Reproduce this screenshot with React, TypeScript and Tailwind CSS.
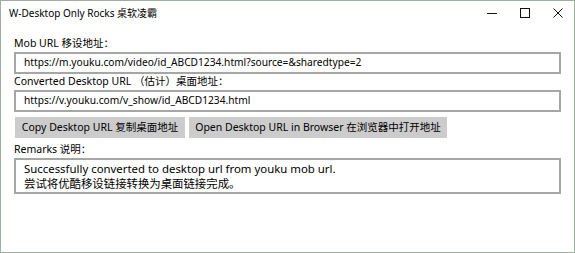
const font = { fontFamily: '"Noto Sans", "Noto Sans CJK SC", sans-serif' };

function TitleBar() {
  return (
    <div className="flex h-[24px] items-center">
      <div className="flex-1 pl-[8px] text-[10px] text-black">W-Desktop Only Rocks 桌软凌霸</div>
      <div className="flex h-full">
        <button className="flex h-full w-[33px] items-center justify-center">
          <svg width="10" height="10" viewBox="0 0 10 10">
            <path d="M0 5.5h10" stroke="#111" strokeWidth="1" />
          </svg>
        </button>
        <button className="flex h-full w-[33px] items-center justify-center">
          <svg width="10" height="10" viewBox="0 0 10 10">
            <rect x="0.5" y="0.5" width="9" height="9" fill="none" stroke="#111" strokeWidth="1" />
          </svg>
        </button>
        <button className="flex h-full w-[33px] items-center justify-center">
          <svg width="10" height="10" viewBox="0 0 10 10">
            <path d="M0.5 0.5l9 9M9.5 0.5l-9 9" stroke="#111" strokeWidth="1" />
          </svg>
        </button>
      </div>
    </div>
  );
}

function Field({ label, value }: { label: string; value: string }) {
  return (
    <div className="flex flex-col">
      <div className="h-[15px] text-[10.5px] leading-[15px] text-black">{label}</div>
      <div className="mt-[1px] flex h-[22px] items-center whitespace-nowrap border-2 border-[#a6a6a6] px-[8px] text-[10.2px] text-black">
        {value}
      </div>
    </div>
  );
}

export default function App() {
  return (
    <div
      className="flex h-[253px] w-[575px] flex-col border border-[#9fae9f] bg-white"
      style={font}
    >
      <TitleBar />
      <div className="flex w-[560px] flex-col pl-[13px] pt-[11px]">
        <Field label="Mob URL 移设地址：" value="https://m.youku.com/video/id_ABCD1234.html?source=&sharedtype=2" />
        <Field label="Converted Desktop URL （估计）桌面地址：" value="https://v.youku.com/v_show/id_ABCD1234.html" />
        <div className="mt-[5px] flex gap-[4px] pl-[1px]">
          <button className="h-[21px] w-[170px] whitespace-nowrap bg-[#cccccc] text-[10.5px] text-black">
            Copy Desktop URL 复制桌面地址
          </button>
          <button className="h-[21px] w-[258px] whitespace-nowrap bg-[#cccccc] text-[10.5px] text-black">
            Open Desktop URL in Browser 在浏览器中打开地址
          </button>
        </div>
        <div className="mt-[4px] h-[15px] text-[10.5px] leading-[15px] text-black">Remarks 说明：</div>
        <div className="mt-[1px] h-[36px] border-2 border-[#a6a6a6] px-[8px] pt-[1px] text-[11.4px] leading-[15px] text-black">
          <div>Successfully converted to desktop url from youku mob url.</div>
          <div>尝试将优酷移设链接转换为桌面链接完成。</div>
        </div>
      </div>
    </div>
  );
}
